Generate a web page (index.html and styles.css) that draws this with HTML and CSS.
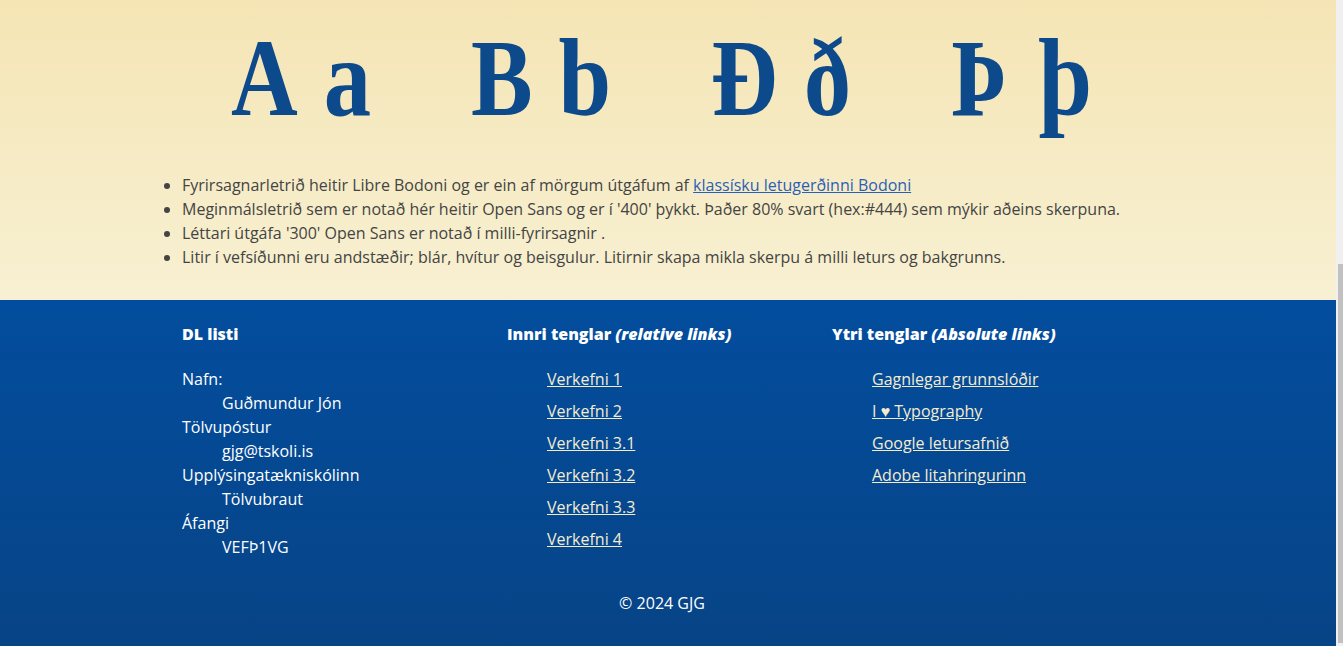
FILE: index.html
```html
<!DOCTYPE html>
<html lang="is">
<head>
<meta charset="utf-8">
<title>Leturgerð og litir</title>
<link rel="stylesheet" href="styles.css">
</head>
<body>
<main class="type-section">
  <div class="specimen">
    <span class="pair"><span class="glyph first">A</span><span class="glyph second">a</span></span>
    <span class="pair"><span class="glyph first">B</span><span class="glyph second">b</span></span>
    <span class="pair"><span class="glyph first">Ð</span><span class="glyph second">ð</span></span>
    <span class="pair"><span class="glyph first">Þ</span><span class="glyph second">þ</span></span>
  </div>
  <ul class="notes">
    <li>Fyrirsagnarletrið heitir Libre Bodoni og er ein af mörgum útgáfum af <a href="#" class="note-link">klassísku letugerðinni Bodoni</a></li>
    <li>Meginmálsletrið sem er notað hér heitir Open Sans og er í '400' þykkt. Það​er 80% svart (hex:#444) sem mýkir aðeins skerpuna.</li>
    <li>Léttari útgáfa '300' Open Sans er notað í milli-fyrirsagnir .</li>
    <li>Litir í vefsíðunni eru andstæðir; blár, hvítur og beisgulur. Litirnir skapa mikla skerpu á milli leturs og bakgrunns.</li>
  </ul>
</main>
<footer class="site-footer">
  <div class="footer-cols">
    <section class="footer-col">
      <h3 class="footer-heading">DL listi</h3>
      <dl class="info-list">
        <dt>Nafn:</dt>
        <dd>Guðmundur Jón</dd>
        <dt>Tölvupóstur</dt>
        <dd>gjg@tskoli.is</dd>
        <dt>Upplýsingatækniskólinn</dt>
        <dd>Tölvubraut</dd>
        <dt>Áfangi</dt>
        <dd>VEFÞ1VG</dd>
      </dl>
    </section>
    <section class="footer-col">
      <h3 class="footer-heading">Innri tenglar <em>(relative links)</em></h3>
      <ul class="link-list">
        <li><a href="#">Verkefni 1</a></li>
        <li><a href="#">Verkefni 2</a></li>
        <li><a href="#">Verkefni 3.1</a></li>
        <li><a href="#">Verkefni 3.2</a></li>
        <li><a href="#">Verkefni 3.3</a></li>
        <li><a href="#">Verkefni 4</a></li>
      </ul>
    </section>
    <section class="footer-col">
      <h3 class="footer-heading">Ytri tenglar <em>(Absolute links)</em></h3>
      <ul class="link-list">
        <li><a href="#">Gagnlegar grunnslóðir</a></li>
        <li><a href="#">I ♥ Typography</a></li>
        <li><a href="#">Google letursafnið</a></li>
        <li><a href="#">Adobe litahringurinn</a></li>
      </ul>
    </section>
  </div>
  <p class="copy">© 2024 GJG</p>
</footer>
<div class="scrollbar" aria-hidden="true"><div class="scrollbar-thumb"></div></div>
</body>
</html>
```

FILE: styles.css
```css
html {
  overflow: hidden;
}
body {
  margin: 0 7px 0 0;
  font-family: "Open Sans", "Liberation Sans", sans-serif;
  font-size: 16px;
  line-height: 24px;
  color: #444;
  background: #f7f0d2;
}
.type-section {
  background: linear-gradient(180deg, #f5e5b5 0%, #f7f0d2 100%);
  padding: 12px 0 31px;
}
.specimen {
  display: flex;
  justify-content: center;
  gap: 100px;
  padding-right: 14px;
  font-family: "Liberation Serif", serif;
  font-weight: 700;
  font-size: 110px;
  line-height: 132px;
  color: #0d4a8c;
  margin-bottom: 29px;
}
.pair {
  width: 140px;
  display: flex;
  justify-content: space-between;
}
.glyph {
  display: inline-block;
}
.glyph.first {
  transform: scaleX(0.84);
  transform-origin: left center;
}
.glyph.second {
  transform: scaleX(0.86);
  transform-origin: right center;
}
.notes {
  width: 975px;
  margin: 0 0 0 calc(50% - 486px);
  padding: 0;
  list-style: disc outside;
}
.note-link {
  color: #2a5fb5;
  text-decoration: underline;
}
.site-footer {
  background: linear-gradient(180deg, #034d9e 0%, #074486 100%);
  color: #fff;
  padding: 22px 0 31px;
}
.footer-cols {
  width: 975px;
  margin: 0 0 0 calc(50% - 486px);
  display: grid;
  grid-template-columns: repeat(3, 1fr);
}
.footer-heading {
  margin: 0 0 21px;
  font-size: 16px;
  line-height: 24px;
  font-weight: 800;
}
.footer-heading em {
  font-style: italic;
}
.info-list {
  margin: 0;
}
.info-list dd {
  margin-left: 40px;
}
.link-list {
  margin: 0;
  padding-left: 40px;
  list-style: none;
  display: flex;
  flex-direction: column;
  gap: 8px;
}
.link-list a {
  color: #f5ecd0;
  text-decoration: underline;
}
.copy {
  margin: 32px 0 0;
  text-align: center;
  padding-right: 12px;
}
.scrollbar {
  position: fixed;
  top: 0;
  right: 0;
  width: 7px;
  height: 100%;
  background: #f0f0f0;
}
.scrollbar-thumb {
  position: absolute;
  top: 264px;
  bottom: 3px;
  left: 2px;
  right: 0;
  background: #c1c1c1;
}
```
